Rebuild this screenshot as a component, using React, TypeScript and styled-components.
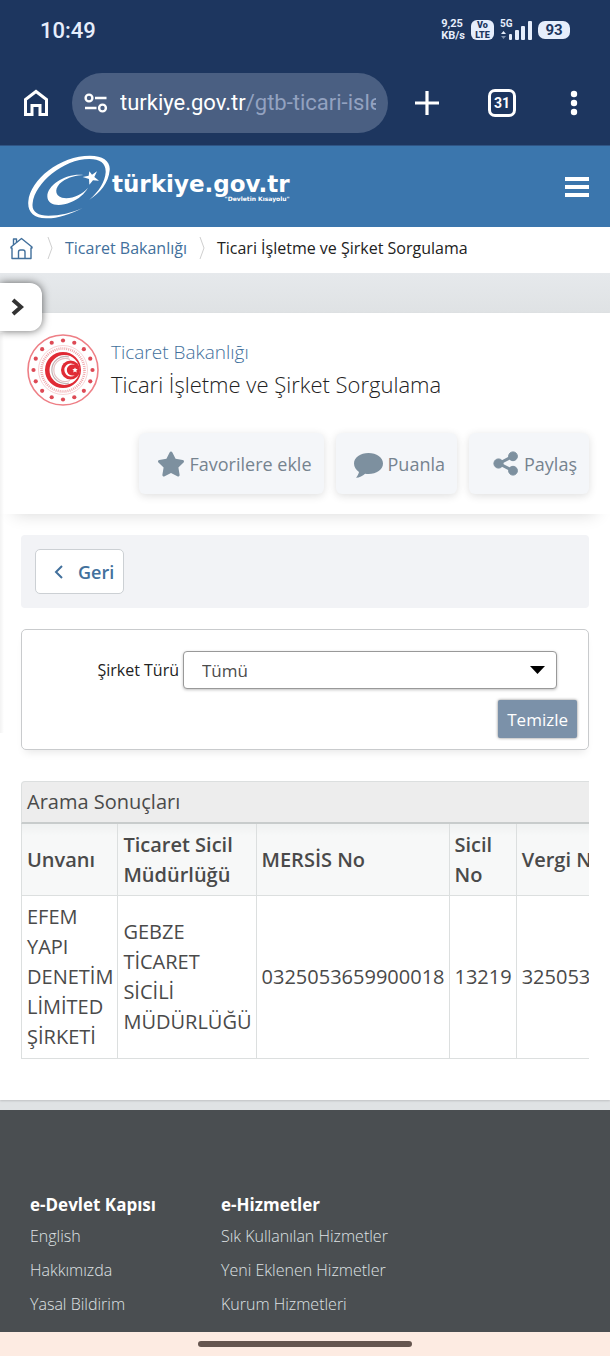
import React, { FC } from 'react'
import styled, { createGlobalStyle } from 'styled-components'
import { FaStar } from 'react-icons/fa'

const GlobalStyle = createGlobalStyle`
  * {
    box-sizing: border-box;
  }

  body {
    margin: 0;
    background: #1d365f;
    font-family: 'Open Sans', 'Liberation Sans', sans-serif;
    color: #222;
  }

  button,
  select {
    font-family: inherit;
  }

  a {
    color: inherit;
    text-decoration: none;
  }
`

const Screen = styled.div`
  display: flex;
  flex-direction: column;
  min-height: 100vh;
`

/* phone status bar */

const StatusBar = styled.div`
  display: flex;
  align-items: center;
  height: 60px;
  padding: 0 40px;
  background: #1d365f;
  color: #e6eefc;
  font-family: Roboto, sans-serif;
`

const Clock = styled.span`
  flex: 1;
  font-size: 22px;
  font-weight: 500;
`

const StatusIcons = styled.div`
  display: flex;
  align-items: center;
  gap: 6px;
`

const StackedText = styled.span`
  font-size: 11px;
  font-weight: 700;
  line-height: 12px;
`

const VolteBadge = styled.span`
  width: 23px;
  border-radius: 6px;
  background: #e6eefc;
  color: #1d365f;
  font-size: 9px;
  font-weight: 900;
  line-height: 10px;
  text-align: center;
`

const Battery = styled.span`
  width: 32px;
  border-radius: 7px;
  background: #e6eefc;
  color: #1d365f;
  font-size: 15px;
  font-weight: 700;
  line-height: 18px;
  text-align: center;
`

/* browser toolbar */

const BrowserBar = styled.div`
  display: grid;
  grid-template-columns: 72px 1fr 78px 72px 72px;
  align-items: center;
  height: 86px;
  background: #1d365f;
  border-bottom: 1px solid #2f5585;
`

const IconButton = styled.button`
  display: flex;
  align-items: center;
  justify-content: center;
  height: 60px;
  padding: 0;
  border: 0;
  background: none;
  color: #fff;
  cursor: pointer;
`

const AddressButton = styled.button`
  display: flex;
  align-items: center;
  gap: 12px;
  min-width: 0;
  height: 60px;
  padding: 0 12px;
  border: 0;
  border-radius: 30px;
  background: #4a5f82;
  color: #fff;
`

const AddressText = styled.span`
  flex: 1;
  min-width: 0;
  overflow: hidden;
  white-space: nowrap;
  text-align: left;
  font-family: Roboto, sans-serif;
  font-size: 22px;
  line-height: 32px;
`

const AddressPath = styled.span`
  color: #93a2c0;
`

const TabCount = styled.span`
  width: 28px;
  border: 3px solid #fff;
  border-radius: 7px;
  font-family: Roboto, sans-serif;
  font-size: 14px;
  font-weight: 700;
  line-height: 22px;
`

/* site header */

const SiteHeader = styled.header`
  display: flex;
  align-items: center;
  justify-content: space-between;
  height: 81px;
  padding: 0 21px 0 28px;
  background: #3b76ad;
  color: #fff;
`

const LogoLink = styled.a`
  display: flex;
  align-items: center;
  gap: 2px;
`

const LogoText = styled.span`
  display: flex;
  flex-direction: column;
  align-items: flex-end;
  font-family: 'DejaVu Sans', sans-serif;
  font-size: 23px;
  font-weight: 700;
  line-height: 24px;
`

const Slogan = styled.small`
  font-size: 6px;
  line-height: 6px;
`

const Breadcrumb = styled.nav`
  display: flex;
  align-items: center;
  gap: 10px;
  height: 46px;
  padding: 0 10px 4px;
  background: #fff;
  font-size: 16px;
  white-space: nowrap;
`

const CrumbLink = styled.a`
  display: flex;
  color: #42709c;
`

const CrumbHomeLink = styled(CrumbLink)`
  margin-right: 2px;
`

/* page */

const PageBody = styled.div`
  flex: 1;
  padding: 40px 0 10px;
  background: linear-gradient(#e6e9ec, #dfe2e4 40px);
`

const Panel = styled.main`
  position: relative;
  padding-bottom: 41px;
  background: #fff;
  box-shadow: 0 1px 2px rgba(0, 0, 0, 0.15);
`

const DrawerShade = styled.div`
  position: absolute;
  top: 20px;
  left: 0;
  width: 4px;
  height: 400px;
  background: linear-gradient(90deg, rgba(0, 0, 0, 0.05), transparent);
`

const DrawerToggle = styled.button`
  position: absolute;
  top: -30px;
  left: 0;
  display: flex;
  align-items: center;
  width: 42px;
  height: 48px;
  padding: 0 0 0 10px;
  border: 0;
  border-radius: 0 12px 12px 0;
  background: #fff;
  box-shadow: 0 0 8px rgba(0, 0, 0, 0.6);
`

const ServiceHeader = styled.section`
  padding: 21px 21px 20px;
  box-shadow: 0 14px 16px -14px rgba(0, 0, 0, 0.16);
`

const ServiceTitle = styled.div`
  display: flex;
  gap: 12px;
  padding-left: 6px;
`

const Titles = styled.div`
  padding-top: 2px;
  font-weight: 300;
  line-height: 32px;
`

const Ministry = styled.a`
  display: block;
  color: #42709c;
  font-size: 19px;
`

const Title = styled.h1`
  margin: 0;
  font-size: 22px;
  font-weight: 300;
`

const Actions = styled.div`
  display: flex;
  justify-content: flex-end;
  gap: 12px;
  margin-top: 27px;
`

const ActionButton = styled.button`
  display: flex;
  align-items: center;
  justify-content: flex-end;
  gap: 5px;
  min-width: 120px;
  height: 61px;
  padding: 0 12px 0 18px;
  border: 0;
  border-radius: 6px;
  background: #f4f6f9;
  box-shadow: 0 2px 8px rgba(0, 0, 0, 0.13);
  color: #76838f;
  font-size: 18px;

  svg {
    color: #7d909f;
  }
`

const Content = styled.div`
  display: flex;
  flex-direction: column;
  gap: 21px;
  padding: 21px 21px 0;
`

const BackBar = styled.div`
  padding: 14px;
  border-radius: 4px;
  background: #f2f3f6;
`

const BackButton = styled.button`
  display: flex;
  align-items: center;
  gap: 14px;
  height: 45px;
  padding: 0 9px 0 18px;
  border: 1px solid #ccd0d4;
  border-radius: 5px;
  background: #fff;
  color: #42709c;
  font-size: 18px;
  font-weight: 600;
`

const FilterForm = styled.form`
  padding: 21px 11px 11px;
  border: 1px solid #c9cbcd;
  border-radius: 5px;
  box-shadow: 0 6px 8px -4px rgba(0, 0, 0, 0.1);
`

const Field = styled.div`
  display: grid;
  grid-template-columns: 146px 1fr;
  align-items: center;
  column-gap: 4px;
  padding-right: 20px;
`

const Label = styled.label`
  font-size: 16px;
  text-align: right;
`

const SelectBox = styled.div`
  position: relative;
`

const SelectArrow = styled.svg`
  position: absolute;
  top: 15px;
  right: 12px;
  pointer-events: none;
`

const Select = styled.select`
  width: 100%;
  height: 38px;
  padding: 0 18px;
  border: 1px solid #999;
  border-radius: 4px;
  appearance: none;
  background: #fff;
  box-shadow: 0 1px 3px rgba(0, 0, 0, 0.25);
  color: #4c4c4c;
  font-size: 17px;
`

const FormActions = styled.div`
  display: flex;
  justify-content: flex-end;
  margin-top: 11px;
`

const ClearButton = styled.button`
  height: 38px;
  padding: 0 9px;
  border: 0;
  border-radius: 2px;
  background: #7b91a9;
  box-shadow: 0 0 3px rgba(0, 0, 0, 0.5);
  color: #fff;
  font-size: 17px;
`

const TableScroll = styled.div`
  margin-top: 10px;
  overflow: hidden;
  color: #4a4a4a;
`

const ResultTable = styled.table`
  width: 100%;
  border-collapse: collapse;
  font-size: 20px;
  line-height: 30px;

  caption {
    padding: 5px;
    border: 1px solid #dcdfdf;
    border-radius: 4px 0 0;
    border-bottom: 2px solid #c8cccc;
    background: #ededed;
    text-align: left;
  }
`

const HeadCell = styled.th`
  padding: 6px 4px 5px 5px;
  border: 1px solid #dcdfdf;
  border-top: 0;
  background: linear-gradient(#eff1f1, #f7f8f8 12px);
  font-weight: 600;
  text-align: left;
`

const Cell = styled.td`
  padding: 6px 4px 6px 5px;
  border: 1px solid #dcdfdf;
`

/* footer */

const Footer = styled.footer`
  display: grid;
  grid-template-columns: 191px 1fr;
  padding: 81px 30px 11px;
  background: #4a4e51;
  color: #dfe2e4;
`

const FooterTitle = styled.h2`
  margin: 0;
  color: #fff;
  font-size: 17px;
  font-weight: 700;
  line-height: 28px;
`

const FooterLinks = styled.ul`
  margin: 0;
  padding: 0;
  list-style: none;
  font-size: 16px;
  font-weight: 300;
  line-height: 34px;
`

const GestureBar = styled.div`
  display: flex;
  align-items: center;
  justify-content: center;
  height: 24px;
  background: #fdebe2;
`

const GestureHandle = styled.span`
  width: 35%;
  height: 6px;
  border-radius: 3px;
  background: #65554f;
`

const SignalIcon = () =>
  <svg width="32" height="22" viewBox="0 0 32 22" fill="#e6eefc" aria-hidden="true">
    <text x="0" y="8" fontSize="10" fontWeight="700" fontFamily="Roboto, sans-serif">5G</text>
    <path d="M1 15l2.500-3 2.500 3z" />
    <path d="M1 17l2.500 3 2.500-3z" opacity="0.500" />
    <rect x="9" y="15" width="3" height="6" rx="1" />
    <rect x="15" y="11" width="4" height="10" rx="1" />
    <rect x="21" y="7" width="4" height="14" rx="1" />
    <rect x="28" y="2" width="4" height="19" rx="1" />
  </svg>

const HomeIcon = () =>
  <svg width="26" height="28" viewBox="0 0 26 28" fill="none" stroke="#fff" strokeWidth="3" aria-hidden="true">
    <path d="M2.500 25.500V10.500L13 2.500l10.500 8v15H17v-9H9v9z" />
  </svg>

const SiteInfoIcon = () =>
  <svg width="24" height="20" viewBox="0 0 24 20" fill="none" stroke="#fff" strokeWidth="2.400" aria-hidden="true">
    <circle cx="5" cy="5" r="3.400" />
    <path d="M11 5h11.500M1 15h11.500" />
    <circle cx="18.500" cy="15" r="3.400" />
  </svg>

const PlusIcon = () =>
  <svg width="26" height="26" viewBox="0 0 26 26" stroke="#fff" strokeWidth="3.200" aria-hidden="true">
    <path d="M13 1v24M1 13h24" />
  </svg>

const DotsIcon = () =>
  <svg width="8" height="26" viewBox="0 0 8 26" fill="#fff" aria-hidden="true">
    <circle cx="4" cy="4" r="3.200" />
    <circle cx="4" cy="13" r="3.200" />
    <circle cx="4" cy="22" r="3.200" />
  </svg>

const LogoMark = () =>
  <svg width="82" height="64" viewBox="84 26 246 192" fill="#fff" aria-hidden="true">
    <path d="M248 185C210 205 170 217 138 216C100 215 82 195 85 165C90 100 180 28 270 28C310 28 332 45 329 72C326 110 300 140 268 160C298 135 315 105 317 78C318 50 300 38 268 38C190 38 105 110 98 170C94 195 112 208 145 208C180 208 215 200 248 185Z" />
    <path d="M250 86C200 80 142 115 142 150C142 176 175 184 212 168C236 158 254 142 264 124C246 146 212 160 186 154C162 146 164 122 186 106C206 92 230 87 250 86Z" />
    <path d="M291 75l-8 17 14 11-18-1-11 13-1-17-19-6 18-4 2-13 8 10z" />
  </svg>

const MenuIcon = () =>
  <svg width="24" height="20" viewBox="0 0 24 20" fill="#fff" aria-hidden="true">
    <path d="M0 0h24v4H0zM0 8h24v4H0zM0 16h24v4H0z" />
  </svg>

const CrumbHomeIcon = () =>
  <svg width="23" height="23" viewBox="0 0 23 23" fill="none" stroke="#42709c" strokeWidth="1.400" strokeLinejoin="round" aria-hidden="true">
    <path d="M1 10L11.500 1.500 22 10v1h-1v10.500H2V11H1z" />
    <path d="M3.500 8V2h3v3.500M8.500 21.500v-6.500a2 2 0 0 1 2-2h2.500a2 2 0 0 1 2 2v6.500" />
  </svg>

const CrumbSeparator = () =>
  <svg width="10" height="24" viewBox="0 0 10 24" fill="none" stroke="#cfcfcf" aria-hidden="true">
    <path d="M3 1l4 11-4 11" />
  </svg>

const CommentIcon = () =>
  <svg width="29" height="29" viewBox="0 -4 29 29" fill="currentColor" aria-hidden="true">
    <path d="M14.500 0C22.500 0 29 4.600 29 10.500S22.500 21 14.500 21c-1.200 0-2.300-.1-3.400-.3C8.700 22.900 5.500 24.500 2 24.800c1.400-1.600 2.600-3.600 3-5.800C2 17.100 0 14 0 10.500 0 4.600 6.500 0 14.500 0z" />
  </svg>

const ShareIcon = () =>
  <svg width="26" height="25" viewBox="0 0 26 25" fill="currentColor" stroke="currentColor" aria-hidden="true">
    <path d="M19.500 5.500L6 12.500l13.500 7" fill="none" strokeWidth="3" />
    <circle cx="5.500" cy="12.500" r="4.600" />
    <circle cx="20" cy="5.300" r="4.400" />
    <circle cx="20" cy="19.700" r="4.400" />
  </svg>

const dotAngles = Array.from({ length: 16 }, (_, i) => i * Math.PI / 8)

const Emblem = () =>
  <svg width="72" height="72" viewBox="0 0 72 72" fill="none" aria-hidden="true">
    <circle cx="36" cy="36" r="35" stroke="#ee7f86" strokeWidth="1.600" />
    {dotAngles.map(angle =>
      <circle
        key={angle}
        cx={36 + 29.5 * Math.sin(angle)}
        cy={36 - 29.5 * Math.cos(angle)}
        r="2.100"
        fill="#dd4a55"
      />
    )}
    <circle cx="36" cy="36" r="24.500" stroke="#f8d3d5" strokeWidth="1" />
    <circle cx="36" cy="36" r="21.500" stroke="#efa9ad" strokeWidth="2.600" strokeDasharray="1 1" />
    <path fillRule="evenodd" fill="#e02b35" d="M36 18a18 18 0 1 0 0 36a18 18 0 1 0 0-36zM37.500 21a15 15 0 1 1 0 30a15 15 0 1 1 0-30z" />
    <path d="M42 23A13.500 13.500 0 1 0 42 49" stroke="#c3b4b5" strokeWidth="1.200" />
    <path d="M43 25.500A11.500 11.500 0 1 0 43 46.500" stroke="#e5c3c5" strokeWidth="1.200" />
    <circle cx="43.500" cy="36" r="9.500" fill="#e02b35" />
    <path d="M48 31A6.500 6.500 0 1 0 48 41A5.600 5.600 0 1 1 48 31z" fill="#fff" />
    <path d="M48 33.500l-.8 1.600-1.900.2 1.400 1.300-.4 1.800 1.700-.9 1.700.9-.4-1.800 1.400-1.300-1.900-.2z" fill="#fff" />
  </svg>

const footerColumns = [
  { title: 'e-Devlet Kapısı', links: ['English', 'Hakkımızda', 'Yasal Bildirim'] },
  { title: 'e-Hizmetler', links: ['Sık Kullanılan Hizmetler', 'Yeni Eklenen Hizmetler', 'Kurum Hizmetleri'] },
]

const App: FC = () =>
  <Screen>
    <GlobalStyle />
    <StatusBar>
      <Clock>10:49</Clock>
      <StatusIcons>
        <StackedText>9,25<br />KB/s</StackedText>
        <VolteBadge>Vo<br />LTE</VolteBadge>
        <SignalIcon />
        <Battery>93</Battery>
      </StatusIcons>
    </StatusBar>
    <BrowserBar>
      <IconButton aria-label="Ana sayfa"><HomeIcon /></IconButton>
      <AddressButton>
        <SiteInfoIcon />
        <AddressText>turkiye.gov.tr<AddressPath>/gtb-ticari-isletme</AddressPath></AddressText>
      </AddressButton>
      <IconButton aria-label="Yeni sekme"><PlusIcon /></IconButton>
      <IconButton><TabCount>31</TabCount></IconButton>
      <IconButton aria-label="Menü"><DotsIcon /></IconButton>
    </BrowserBar>
    <SiteHeader>
      <LogoLink href="#">
        <LogoMark />
        <LogoText>
          türkiye.gov.tr
          <Slogan>"Devletin Kısayolu"</Slogan>
        </LogoText>
      </LogoLink>
      <IconButton aria-label="Site menüsü"><MenuIcon /></IconButton>
    </SiteHeader>
    <Breadcrumb>
      <CrumbHomeLink href="#" aria-label="Ana sayfa"><CrumbHomeIcon /></CrumbHomeLink>
      <CrumbSeparator />
      <CrumbLink href="#">Ticaret Bakanlığı</CrumbLink>
      <CrumbSeparator />
      <span>Ticari İşletme ve Şirket Sorgulama</span>
    </Breadcrumb>
    <PageBody>
      <Panel>
        <DrawerShade />
        <DrawerToggle aria-label="Menüyü aç">
          <svg width="14" height="20" viewBox="0 0 14 20" fill="none" stroke="#333" strokeWidth="4" aria-hidden="true">
            <path d="M3 3l8 7-8 7" />
          </svg>
        </DrawerToggle>
        <ServiceHeader>
          <ServiceTitle>
            <Emblem />
            <Titles>
              <Ministry href="#">Ticaret Bakanlığı</Ministry>
              <Title>Ticari İşletme ve Şirket Sorgulama</Title>
            </Titles>
          </ServiceTitle>
          <Actions>
            <ActionButton><FaStar size={28} />Favorilere ekle</ActionButton>
            <ActionButton><CommentIcon />Puanla</ActionButton>
            <ActionButton><ShareIcon />Paylaş</ActionButton>
          </Actions>
        </ServiceHeader>
        <Content>
          <BackBar>
            <BackButton>
              <svg width="10" height="14" viewBox="0 0 10 14" fill="none" stroke="#42709c" strokeWidth="2" aria-hidden="true">
                <path d="M8 1L2 7l6 6" />
              </svg>
              Geri
            </BackButton>
          </BackBar>
          <FilterForm onSubmit={e => e.preventDefault()}>
            <Field>
              <Label htmlFor="sirketTuru">Şirket Türü</Label>
              <SelectBox>
                <Select id="sirketTuru">
                  <option>Tümü</option>
                </Select>
                <SelectArrow width="15" height="8" viewBox="0 0 15 8" aria-hidden="true">
                  <path d="M0 0h15L7.500 8z" />
                </SelectArrow>
              </SelectBox>
            </Field>
            <FormActions>
              <ClearButton type="reset">Temizle</ClearButton>
            </FormActions>
          </FilterForm>
          <TableScroll>
            <ResultTable>
              <caption>Arama Sonuçları</caption>
              <thead>
                <tr>
                  <HeadCell>Unvanı</HeadCell>
                  <HeadCell>Ticaret Sicil Müdürlüğü</HeadCell>
                  <HeadCell>MERSİS No</HeadCell>
                  <HeadCell>Sicil No</HeadCell>
                  <HeadCell>Vergi No</HeadCell>
                </tr>
              </thead>
              <tbody>
                <tr>
                  <Cell>EFEM YAPI DENETİM LİMİTED ŞİRKETİ</Cell>
                  <Cell>GEBZE TİCARET SİCİLİ MÜDÜRLÜĞÜ</Cell>
                  <Cell>0325053659900018</Cell>
                  <Cell>13219</Cell>
                  <Cell>3250536599</Cell>
                </tr>
              </tbody>
            </ResultTable>
          </TableScroll>
        </Content>
      </Panel>
    </PageBody>
    <Footer>
      {footerColumns.map(column =>
        <section key={column.title}>
          <FooterTitle>{column.title}</FooterTitle>
          <FooterLinks>
            {column.links.map(link =>
              <li key={link}><a href="#">{link}</a></li>
            )}
          </FooterLinks>
        </section>
      )}
    </Footer>
    <GestureBar><GestureHandle /></GestureBar>
  </Screen>

export default App
